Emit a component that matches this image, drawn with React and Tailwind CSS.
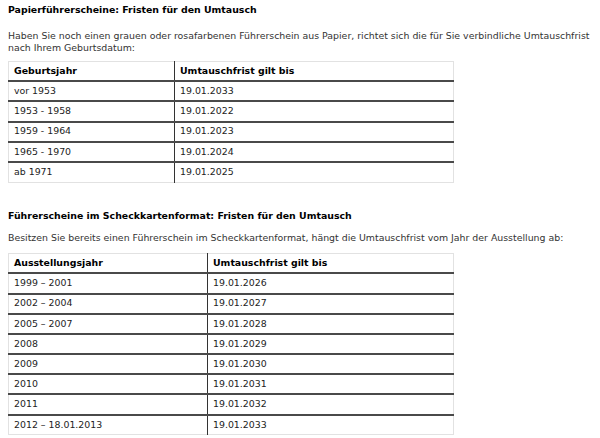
const papier = [
  ['vor 1953', '19.01.2033'],
  ['1953 - 1958', '19.01.2022'],
  ['1959 - 1964', '19.01.2023'],
  ['1965 - 1970', '19.01.2024'],
  ['ab 1971', '19.01.2025'],
]

const karte = [
  ['1999 – 2001', '19.01.2026'],
  ['2002 – 2004', '19.01.2027'],
  ['2005 – 2007', '19.01.2028'],
  ['2008', '19.01.2029'],
  ['2009', '19.01.2030'],
  ['2010', '19.01.2031'],
  ['2011', '19.01.2032'],
  ['2012 – 18.01.2013', '19.01.2033'],
]

function Table({ head, rows, col }) {
  return (
    <table className="w-[446px] border-collapse border border-[#e2e2e2] text-[#222]">
      <thead>
        <tr className="h-[20.2px] border-b-2 border-[#4a4a4a]">
          <th className={`${col} border-r border-[#333] px-[5px] text-left font-bold text-black`}>{head[0]}</th>
          <th className="px-[5px] text-left font-bold text-black">{head[1]}</th>
        </tr>
      </thead>
      <tbody>
        {rows.map(([a, b], i) => (
          <tr key={a} className={`h-[20.2px] ${i < rows.length - 1 ? 'border-b-2 border-[#4a4a4a]' : ''}`}>
            <td className="border-r border-[#333] px-[5px]">{a}</td>
            <td className="px-[5px]">{b}</td>
          </tr>
        ))}
      </tbody>
    </table>
  )
}

export default function App() {
  return (
    <div className="w-[600px] h-[438px] overflow-hidden bg-white px-2 pt-[4px] text-[9.4px] leading-[12.5px] text-[#333]" style={{ fontFamily: '"DejaVu Sans", Verdana, sans-serif' }}>
      <h2 className="font-bold text-black">Papierführerscheine: Fristen für den Umtausch</h2>
      <p className="mt-[13px] mb-[6px]">
        Haben Sie noch einen grauen oder rosafarbenen Führerschein aus Papier, richtet sich die für Sie verbindliche Umtauschfrist nach Ihrem Geburtsdatum:
      </p>
      <Table head={['Geburtsjahr', 'Umtauschfrist gilt bis']} rows={papier} col="w-[166px]" />

      <h2 className="mt-[27px] font-bold text-black">Führerscheine im Scheckkartenformat: Fristen für den Umtausch</h2>
      <p className="mt-[10px] mb-[8px]">
        Besitzen Sie bereits einen Führerschein im Scheckkartenformat, hängt die Umtauschfrist vom Jahr der Ausstellung ab:
      </p>
      <Table head={['Ausstellungsjahr', 'Umtauschfrist gilt bis']} rows={karte} col="w-[199px]" />
    </div>
  )
}
